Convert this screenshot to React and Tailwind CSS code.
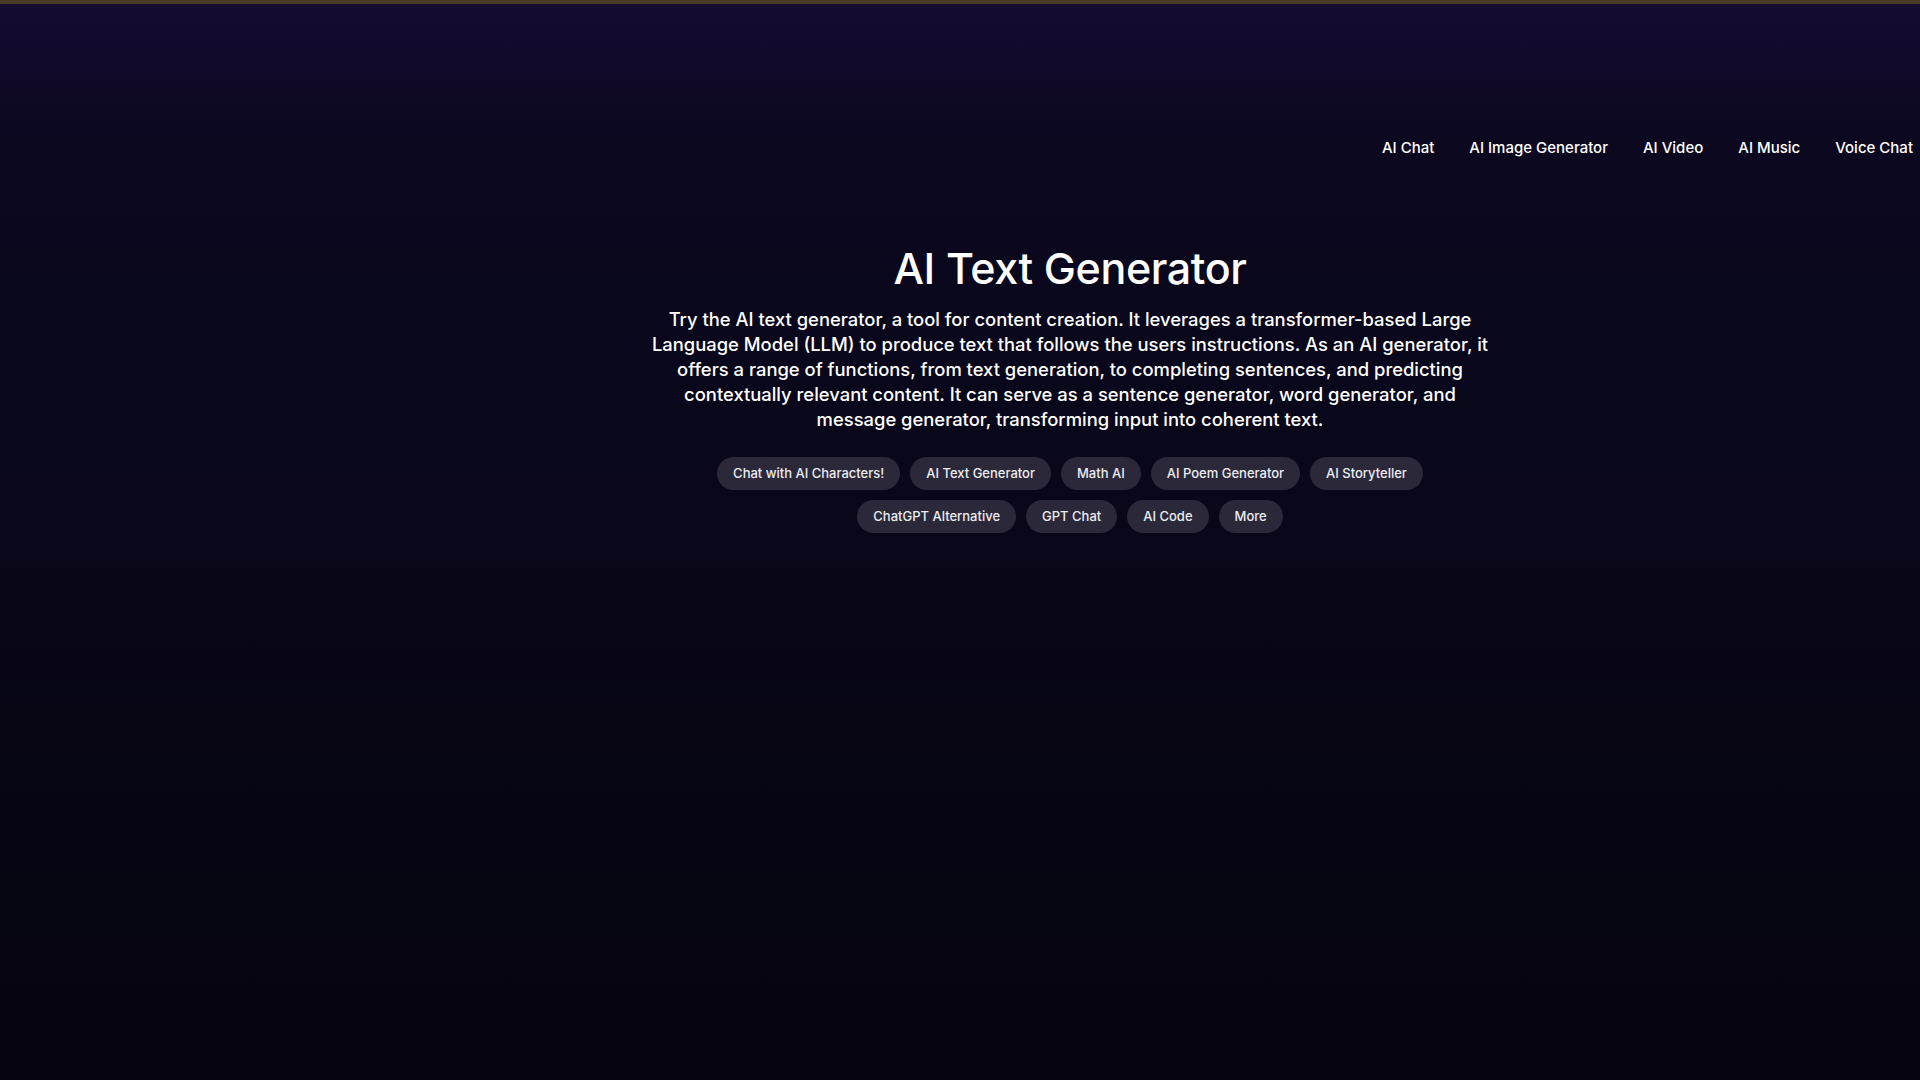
import React from "react";

const nav = ["AI Chat", "AI Image Generator", "AI Video", "AI Music", "Voice Chat"];
const row1 = ["Chat with AI Characters!", "AI Text Generator", "Math AI", "AI Poem Generator", "AI Storyteller"];
const row2 = ["ChatGPT Alternative", "GPT Chat", "AI Code", "More"];

function Chip({ label }) {
  return (
    <button className="h-[33px] px-4 rounded-full bg-[#2a2839] text-[13px] font-medium text-[#ececf1] leading-none">
      {label}
    </button>
  );
}

export default function App() {
  return (
    <div
      className="min-h-screen w-full text-white bg-[linear-gradient(to_bottom,#160b32_0px,#0b0820_140px,#090719_500px,#05040f_1080px)]"
      style={{ fontFamily: "Inter, 'Noto Sans', sans-serif" }}
    >
      <div className="h-1 bg-[#4b3b27]" />
      <div className="flex">
        <aside className="w-[220px] shrink-0" />
        <main className="flex-1 flex flex-col">
          <header className="flex justify-end pt-[134px] pr-[7px]">
            <nav className="flex gap-[35px] text-[15px] font-medium leading-5 text-white">
              {nav.map((n) => (
                <a key={n} className="whitespace-nowrap">{n}</a>
              ))}
            </nav>
          </header>
          <section className="flex flex-col items-center mt-[85px]">
            <h1 className="text-[43px] leading-[1.2] font-medium tracking-[-0.4px]">AI Text Generator</h1>
            <p className="mt-[12px] w-[845px] text-center text-[18.4px] leading-[25px] font-medium text-white">
              Try the AI text generator, a tool for content creation. It leverages a transformer-based Large Language Model (LLM) to produce text that follows the users instructions. As an AI generator, it offers a range of functions, from text generation, to completing sentences, and predicting contextually relevant content. It can serve as a sentence generator, word generator, and message generator, transforming input into coherent text.
            </p>
            <div className="mt-[25px] flex flex-col items-center gap-[10px]">
              <div className="flex gap-[10px]">
                {row1.map((c) => <Chip key={c} label={c} />)}
              </div>
              <div className="flex gap-[10px]">
                {row2.map((c) => <Chip key={c} label={c} />)}
              </div>
            </div>
          </section>
        </main>
      </div>
    </div>
  );
}
